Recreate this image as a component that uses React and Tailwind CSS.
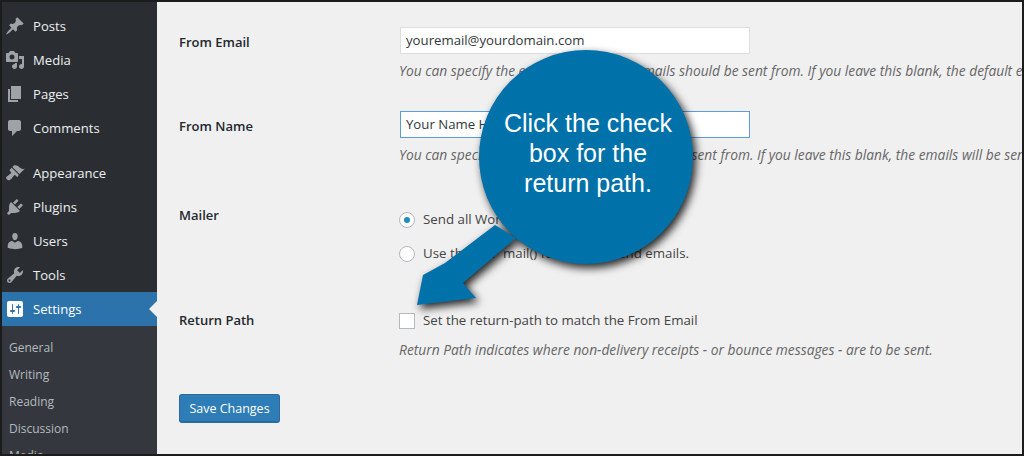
import React from 'react';

const paths = {
  posts: 'M10.44 3.02l1.82-1.82 6.36 6.35-1.83 1.82c-1.05-.68-2.48-.57-3.41.36l-.75.75c-.92.93-1.04 2.35-.35 3.41l-1.83 1.82-2.41-2.41-2.8 2.79c-.42.42-3.38 2.71-3.8 2.29s1.86-3.39 2.28-3.81l2.79-2.79L4.1 9.36l1.83-1.82c1.05.69 2.48.57 3.4-.36l.75-.75c.93-.92 1.05-2.35.36-3.41z',
  media: 'M13 11V4c0-.55-.45-1-1-1h-1.67L9 1H5L3.67 3H2c-.55 0-1 .45-1 1v7c0 .55.45 1 1 1h10c.55 0 1-.45 1-1zM7 4.5c1.38 0 2.5 1.12 2.5 2.5S8.38 9.5 7 9.5 4.5 8.38 4.5 7 5.62 4.5 7 4.5zM14 6h5v10.5c0 1.38-1.12 2.5-2.5 2.5S14 17.88 14 16.5s1.12-2.5 2.5-2.5c.17 0 .34.02.5.05V9h-3V6zm-4 8.05V13h2v3.5c0 1.38-1.12 2.5-2.5 2.5S7 17.88 7 16.5 8.12 14 9.5 14c.17 0 .34.02.5.05z',
  pages: 'M6 15V2h10v13H6zm-1 1h8v2H3V5h2v11z',
  comments: 'M5 2h9c1.1 0 2 .9 2 2v7c0 1.1-.9 2-2 2h-2l-5 5v-5H5c-1.1 0-2-.9-2-2V4c0-1.1.9-2 2-2z',
  appearance: 'M14.48 11.06L7.41 3.99l1.5-1.5c.5-.56 2.3-.47 3.51.32 1.21.8 1.43 1.28 2.91 2.1 1.18.64 2.45 1.26 4.45.85zm-.71.71L6.7 4.7 4.93 6.47c-.39.39-.39 1.02 0 1.41l1.06 1.06c.39.39.39 1.03 0 1.42-.6.6-1.43 1.11-2.21 1.69-.35.26-.7.53-1.01.84C1.43 13.23.4 14.84 1.98 16.42c1.59 1.58 3.19.56 4.53-.79.31-.31.58-.66.85-1.02.57-.78 1.08-1.6 1.69-2.21.39-.39 1.02-.39 1.41 0l1.06 1.06c.39.39 1.02.39 1.41 0z',
  plugins: 'M13.11 4.36L9.87 7.6 8 5.73l3.24-3.24c.35-.34 1.05-.2 1.56.32.52.51.66 1.21.31 1.55zm-8 1.77l.91-1.12 9.01 9.01-1.19.84c-.71.71-2.63 1.16-3.82 1.16H6.14L4.9 17.26c-.59.59-1.54.59-2.12 0-.59-.58-.59-1.53 0-2.12l1.24-1.24v-3.88c0-1.13.4-3.19 1.09-3.89zm7.26 3.97l3.24-3.24c.34-.35 1.04-.21 1.55.31.52.51.66 1.21.31 1.55l-3.24 3.25z',
  users: 'M10 9.25c-2.27 0-2.73-3.44-2.73-3.44C7 4.02 7.82 2 9.97 2c2.16 0 2.98 2.02 2.71 3.81 0 0-.41 3.44-2.68 3.44zm0 2.57L12.72 10c2.39 0 4.52 2.33 4.52 4.53v2.49s-3.65 1.13-7.24 1.13c-3.65 0-7.24-1.13-7.24-1.13v-2.49c0-2.25 1.94-4.48 4.47-4.48z',
  tools: 'M16.68 9.77c-1.34 1.34-3.3 1.67-4.95.99l-5.41 6.52c-.99.99-2.59.99-3.58 0s-.99-2.59 0-3.57l6.52-5.42c-.68-1.65-.35-3.61.99-4.95 1.28-1.28 3.12-1.62 4.72-1.06l-2.89 2.89 2.82 2.82 2.86-2.87c.53 1.58.18 3.39-1.08 4.65zM3.81 16.21c.4.39 1.04.39 1.43 0 .4-.4.4-1.04 0-1.43-.39-.4-1.03-.4-1.43 0-.39.39-.39 1.03 0 1.43z',
  settings: 'M18 16V4c0-1.1-.9-2-2-2H4c-1.1 0-2 .9-2 2v12c0 1.1.9 2 2 2h12c1.1 0 2-.9 2-2zM8 11h1c.55 0 1 .45 1 1s-.45 1-1 1H8v1.5c0 .28-.22.5-.5.5s-.5-.22-.5-.5V13H6c-.55 0-1-.45-1-1s.45-1 1-1h1V5.5c0-.28.22-.5.5-.5s.5.22.5.5V11zm5-2h-1c-.55 0-1-.45-1-1s.45-1 1-1h1V5.5c0-.28.22-.5.5-.5s.5.22.5.5V7h1c.55 0 1 .45 1 1s-.45 1-1 1h-1v5.5c0 .28-.22.5-.5.5s-.5-.22-.5-.5V9z',
};

const MenuItem = ({ icon, label, gap }) => (
  <div className={`flex h-[34px] items-center pl-[2px] text-[13.1px] text-[#eeeeee] ${gap ? 'mt-[11px]' : ''}`}>
    <svg viewBox="0 0 20 20" className="h-5 w-5 shrink-0 fill-[#9ea3a8]">
      <path d={paths[icon]} />
    </svg>
    <span className="ml-[8px] mt-[2px]">{label}</span>
  </div>
);

const Row = ({ label, children, className }) => (
  <div className={`flex ${className}`}>
    <div className="w-[221px] shrink-0 font-semibold text-[#23282d]">{label}</div>
    <div className="min-w-0 flex-1">{children}</div>
  </div>
);

const Desc = ({ children }) => (
  <p className="-ml-px whitespace-nowrap text-[13.8px] italic leading-5 text-[#666666]">{children}</p>
);

const App = () => {
  return (
    <div className="relative box-border flex h-[456px] w-[1024px] overflow-hidden border-2 border-[#1c1c1c] bg-[#f0f0f1] font-['Open_Sans',sans-serif] text-[13.3px] text-[#444444]">
      <div className="flex w-[155px] shrink-0 flex-col bg-[#2a2e33]">
        <div className="shrink-0 pt-[7px] pl-[1px]">
          <MenuItem icon="posts" label="Posts" />
          <MenuItem icon="media" label="Media" />
          <MenuItem icon="pages" label="Pages" />
          <MenuItem icon="comments" label="Comments" />
          <MenuItem icon="appearance" label="Appearance" gap />
          <MenuItem icon="plugins" label="Plugins" />
          <MenuItem icon="users" label="Users" />
          <MenuItem icon="tools" label="Tools" />
        </div>
        <div className="relative flex h-[34px] shrink-0 items-center bg-[#2c73ab] pl-[3px] text-[13.1px] text-white">
          <svg viewBox="0 0 20 20" className="h-5 w-5 shrink-0 fill-white">
            <path d={paths.settings} />
          </svg>
          <span className="ml-[8px] mt-[2px]">Settings</span>
          <div className="absolute top-[9px] right-0 h-0 w-0 border-y-[8px] border-r-[8px] border-y-transparent border-r-[#f0f0f1]" />
        </div>
        <div className="flex-1 bg-[#34383e] pt-[8px] pl-[7px] text-[12px] text-[#b4b9be]">
          {['General', 'Writing', 'Reading', 'Discussion', 'Media'].map(item => (
            <div key={item} className="flex h-[27px] items-center">{item}</div>
          ))}
        </div>
      </div>

      <div className="min-w-0 flex-1 overflow-hidden pt-[25px] pl-[22px]">
        <Row label={<div className="pt-[6px] text-[13px]">From Email</div>} className="h-[84px]">
          <div className="flex h-[27px] w-[350px] items-center border border-[#dddddd] bg-white pl-[5px] text-[13.2px] text-[#32373c]">youremail@yourdomain.com</div>
          <div className="mt-[7px]">
            <Desc>You can specify the email address that emails should be sent from. If you leave this blank, the default email will be used.</Desc>
          </div>
        </Row>
        <Row label={<div className="pt-[6px] text-[13px]">From Name</div>} className="h-[84px]">
          <div className="flex h-[27px] w-[350px] items-center border border-[#5b9dd9] bg-white pl-[5px] text-[13.2px] text-[#32373c]">Your Name Here</div>
          <div className="mt-[7px]">
            <Desc>You can specify the name that emails should be sent from. If you leave this blank, the emails will be sent from WordPress.</Desc>
          </div>
        </Row>
        <Row label={<div className="pt-[11px] text-[13px]">Mailer</div>} className="h-[105px]">
          <div className="-ml-px pt-[16px]">
            <div className="flex h-[17px] items-center">
              <div className="flex h-4 w-4 items-center justify-center rounded-full border border-[#b4b9be] bg-white">
                <div className="h-[6px] w-[6px] rounded-full bg-[#1e8cbe]" />
              </div>
              <span className="ml-2">Send all WordPress emails via SMTP.</span>
            </div>
            <div className="mt-[17px] flex h-[17px] items-center">
              <div className="h-4 w-4 rounded-full border border-[#b4b9be] bg-white" />
              <span className="ml-2">Use the PHP mail() function to send emails.</span>
            </div>
          </div>
        </Row>
        <Row label={<div className="pt-[11px] text-[13px]">Return Path</div>} className="h-[94px]">
          <div className="pt-[12px]">
            <div className="-ml-px flex h-[17px] items-center">
              <div className="h-4 w-4 border border-[#b4b9be] bg-white" />
              <span className="ml-2">Set the return-path to match the From Email</span>
            </div>
            <div className="mt-[11px]">
              <Desc>Return Path indicates where non-delivery receipts - or bounce messages - are to be sent.</Desc>
            </div>
          </div>
        </Row>
        <button className="h-[29px] w-[101px] rounded-[3px] border border-b-2 border-[#2a6a9d] bg-[#2e7db6] pt-[2px] text-[12.5px] text-white">Save Changes</button>
      </div>

      {/* callout over the form */}
      <svg viewBox="0 0 1024 456" className="absolute top-[-2px] left-[-2px] h-[456px] w-[1024px] drop-shadow-[3px_4px_4px_rgba(0,0,0,0.85)]">
        <polygon points="495,225 445,263 423,275 417,305 476,298 463,283 516,238" fill="#0071a9" />
        <circle cx="586" cy="157" r="107" fill="#0071a9" />
      </svg>
      <div className="absolute top-[106px] left-[496px] w-[180px] text-center font-['Liberation_Sans',sans-serif] text-[25px] leading-[30px] text-white">
        Click the check box for the return path.
      </div>
    </div>
  );
};

export default App;
